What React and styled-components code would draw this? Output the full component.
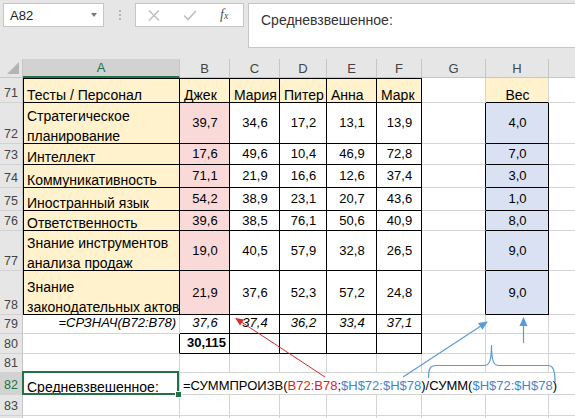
import React from 'react';
import styled, { createGlobalStyle } from 'styled-components';

const GRID = '#d4d4d4';
const CREAM = '#fff2cc';
const PINK = '#fad9d9';
const BLUE = '#d9e1f2';
const GREEN = '#217346';

const GlobalStyle = createGlobalStyle`
  html, body { margin: 0; padding: 0; }
  body { background: #fff; font-family: 'Liberation Sans', Arial, sans-serif; }
`;

// column I is mostly off screen, its letter is not visible
const columns = ['A', 'B', 'C', 'D', 'E', 'F', 'G', 'H', ''];
const people = ['Джек', 'Мария', 'Питер', 'Анна', 'Марк'];

const tests = [
  { n: 72, name: ['Стратегическое', 'планирование'], vals: ['39,7', '34,6', '17,2', '13,1', '13,9'], w: '4,0' },
  { n: 73, name: ['Интеллект'], vals: ['17,6', '49,6', '10,4', '46,9', '72,8'], w: '7,0' },
  { n: 74, name: ['Коммуникативность'], vals: ['71,1', '21,9', '16,6', '12,6', '37,4'], w: '3,0' },
  { n: 75, name: ['Иностранный язык'], vals: ['54,2', '38,9', '23,1', '20,7', '43,6'], w: '1,0' },
  { n: 76, name: ['Ответственность'], vals: ['39,6', '38,5', '76,1', '50,6', '40,9'], w: '8,0' },
  { n: 77, name: ['Знание инструментов', 'анализа продаж'], vals: ['19,0', '40,5', '57,9', '32,8', '26,5'], w: '9,0' },
  { n: 78, name: ['Знание', 'законодательных актов'], vals: ['21,9', '37,6', '52,3', '57,2', '24,8'], w: '9,0' },
];

const averages = ['37,6', '37,4', '36,2', '33,4', '37,1'];

function App() {
  return (
    <>
      <GlobalStyle />
      <Page>
        <FormulaBar>
          <NameBox>
            A82
            <Caret />
          </NameBox>
          <Grip>
            <Dot />
            <Dot />
            <Dot />
          </Grip>
          <FxBox>
            <ToolIcon width="12" height="11" viewBox="0 0 12 11">
              <path d="M1 0.5 L11 10.5 M11 0.5 L1 10.5" stroke="#bdbdbd" strokeWidth="1.3" fill="none" />
            </ToolIcon>
            <ToolIcon width="14" height="11" viewBox="0 0 14 11" $gap={23}>
              <path d="M1 5.5 L5 9.5 L13 1" stroke="#bdbdbd" strokeWidth="1.6" fill="none" />
            </ToolIcon>
            <FxLabel>
              f<small>x</small>
            </FxLabel>
          </FxBox>
          <FormulaInput>Средневзвешенное:</FormulaInput>
        </FormulaBar>

        <Sheet>
          <Corner>
            <svg width="14" height="13" viewBox="0 0 14 13">
              <polygon points="13,0 13,12 1,12" fill="#b4b4b4" />
            </svg>
          </Corner>
          {columns.map((c, i) => (
            <ColHead key={i} $active={c === 'A'}>{c}</ColHead>
          ))}

          {/* 71 */}
          <RowHead>71</RowHead>
          <Cell $bg={CREAM} $r="#000" $b="#000" $lt $tp>
            <Label>Тесты / Персонал</Label>
          </Cell>
          {people.map(p => (
            <Cell key={p} $bg={CREAM} $r="#000" $b="#000" $tp>
              <Label>{p}</Label>
            </Cell>
          ))}
          <Cell />
          <Cell $bg={CREAM} $b="#000" $h="center">
            <Label>Вес</Label>
          </Cell>
          <Cell />

          {tests.map(t => (
            <React.Fragment key={t.n}>
              <RowHead>{t.n}</RowHead>
              <Cell $bg={CREAM} $r="#000" $b="#000" $lt>
                <Label>
                  {t.name.map(line => (
                    <span key={line}>{line}</span>
                  ))}
                </Label>
              </Cell>
              {t.vals.map((v, i) => (
                <Cell key={i} $bg={i === 0 ? PINK : '#fff'} $r="#000" $b="#000" $h="center" $v="center">
                  <Num>{v}</Num>
                </Cell>
              ))}
              <Cell $r="#000" />
              <Cell $bg={BLUE} $r="#000" $b="#000" $h="center" $v="center">
                <Num>{t.w}</Num>
              </Cell>
              <Cell />
            </React.Fragment>
          ))}

          {/* 79 */}
          <RowHead>79</RowHead>
          <Cell $h="right">
            <Num $italic>=СРЗНАЧ(B72:B78)</Num>
          </Cell>
          {averages.map((v, i) => (
            <Cell key={i} $r="#000" $b="#000" $h="center">
              <Num $italic>{v}</Num>
            </Cell>
          ))}
          <Cell />
          <Cell />
          <Cell />

          {/* 80 */}
          <RowHead>80</RowHead>
          <Cell $r="#000" />
          <Cell $r="#000" $b="#000" $h="right">
            <Num $bold>30,115</Num>
          </Cell>
          <Cell $r="#000" $b="#000" />
          <Cell $r="#000" $b="#000" />
          <Cell $r="#000" $b="#000" />
          <Cell $r="#000" $b="#000" />
          <Cell />
          <Cell />
          <Cell />

          {/* 81 */}
          <RowHead>81</RowHead>
          {columns.map((c, i) => (
            <Cell key={i} />
          ))}

          {/* 82 */}
          <RowHead $active>82</RowHead>
          <Selected>
            <Label>Средневзвешенное:</Label>
          </Selected>
          <Overflow>
            <Formula>
              =СУММПРОИЗВ(<Ref $c="#e31c1c">B72:B78</Ref>;<Ref $c="#3f86cf">$H$72:$H$78</Ref>)/СУММ(
              <Ref $c="#3f86cf">$H$72:$H$78</Ref>)
            </Formula>
          </Overflow>

          {/* 83 and the edge of the next row */}
          <RowHead>83</RowHead>
          {columns.map((c, i) => (
            <Cell key={i} />
          ))}
          <RowHead />
          {columns.map((c, i) => (
            <Cell key={i} />
          ))}
        </Sheet>

        <Arrows width="575" height="418" viewBox="0 0 575 418">
          <defs>
            <marker id="redHead" viewBox="0 0 10 10" refX="9" refY="5" markerWidth="9" markerHeight="8" markerUnits="userSpaceOnUse" orient="auto">
              <path d="M0 0.5 L10 5 L0 9.5 z" fill="#d52b2b" />
            </marker>
            <marker id="blueHead" viewBox="0 0 10 10" refX="9" refY="5" markerWidth="10" markerHeight="9" markerUnits="userSpaceOnUse" orient="auto">
              <path d="M0 0.5 L10 5 L0 9.5 z" fill="#5b9bd5" />
            </marker>
          </defs>
          <path d="M325 377 L236 318.5" stroke="#d52b2b" strokeWidth="1" fill="none" markerEnd="url(#redHead)" />
          <path d="M403 377 L487 322" stroke="#5b9bd5" strokeWidth="1.2" fill="none" markerEnd="url(#blueHead)" />
          <path d="M523.5 343 L523.5 318" stroke="#5b9bd5" strokeWidth="1.2" fill="none" markerEnd="url(#blueHead)" />
          <path
            d="M428.5 378 C428.5 369 430 365.5 436 365.5 L484 365.5 C489 365.5 491.5 362 491.5 345 C491.5 362 494 365.5 499 365.5 L548 365.5 C553 365.5 555 370 555 382"
            stroke="#5b9bd5"
            strokeWidth="1.2"
            fill="none"
          />
        </Arrows>
      </Page>
    </>
  );
}

const Page = styled.div`
  position: relative;
  width: 575px;
  height: 418px;
  overflow: hidden;
  background: #e6e6e6;
  display: flex;
  flex-direction: column;
`;

const FormulaBar = styled.div`
  height: 59px;
  flex-shrink: 0;
  display: flex;
  align-items: flex-start;
  padding: 3px 0 0 3px;
  box-sizing: border-box;
`;

const NameBox = styled.div`
  width: 101px;
  height: 24px;
  box-sizing: border-box;
  background: #fff;
  border: 1px solid #c6c6c6;
  display: flex;
  align-items: center;
  justify-content: space-between;
  padding: 0 6px 0 6px;
  font-size: 13px;
  color: #222;
`;

const Caret = styled.span`
  width: 0;
  height: 0;
  border-left: 3.5px solid transparent;
  border-right: 3.5px solid transparent;
  border-top: 4px solid #7a7a7a;
`;

const Grip = styled.div`
  width: 31px;
  height: 24px;
  display: flex;
  flex-direction: column;
  align-items: center;
  justify-content: center;
  gap: 2px;
`;

const Dot = styled.span`
  width: 2px;
  height: 2px;
  background: #b4b4b4;
`;

const FxBox = styled.div`
  width: 109px;
  height: 24px;
  box-sizing: border-box;
  background: #fff;
  border: 1px solid #c6c6c6;
  display: flex;
  align-items: center;
  padding-left: 12px;
`;

const ToolIcon = styled.svg`
  margin-left: ${p => p.$gap || 0}px;
`;

const FxLabel = styled.span`
  margin-left: 23px;
  font-family: 'Liberation Serif', 'Times New Roman', serif;
  font-style: italic;
  font-size: 14px;
  color: #555;
  small {
    font-size: 10px;
  }
`;

const FormulaInput = styled.div`
  margin-left: 4px;
  flex: 1;
  height: 45px;
  box-sizing: border-box;
  background: #fff;
  border: 1px solid #c6c6c6;
  border-right: none;
  padding: 8px 0 0 12px;
  font-size: 14px;
  color: #333;
`;

const Sheet = styled.div`
  display: grid;
  grid-template-columns: 23px 157px 50px 50px 47px 50px 45px 64px 63px 64px;
  grid-template-rows: 19px 25px 41px 21px 23px 23px 20px 40px 44px 19px 20px 19px 22px 21px 20px;
  background: #fff;
`;

const Corner = styled.div`
  background: #e6e6e6;
  border-right: 1px solid #c6c6c6;
  border-bottom: 1px solid #c6c6c6;
  box-sizing: border-box;
  display: flex;
  align-items: flex-end;
  justify-content: flex-end;
  padding: 0 2px 2px 0;
`;

const ColHead = styled.div`
  box-sizing: border-box;
  background: ${p => (p.$active ? '#d2d2d2' : '#e6e6e6')};
  color: ${p => (p.$active ? GREEN : '#444')};
  border-right: 1px solid #c6c6c6;
  border-bottom: ${p => (p.$active ? `2px solid ${GREEN}` : '1px solid #c6c6c6')};
  display: flex;
  align-items: center;
  justify-content: center;
  font-size: 13px;
`;

const RowHead = styled.div`
  box-sizing: border-box;
  background: ${p => (p.$active ? '#d2d2d2' : '#e6e6e6')};
  color: ${p => (p.$active ? GREEN : '#444')};
  border-right: 1px solid #c6c6c6;
  border-bottom: 1px solid #d2d2d2;
  display: flex;
  align-items: flex-end;
  justify-content: center;
  padding-bottom: 2px;
  font-size: 12.5px;
  line-height: 14px;
`;

const justify = { left: 'flex-start', center: 'center', right: 'flex-end' };

const Cell = styled.div`
  position: relative;
  box-sizing: border-box;
  min-width: 0;
  background: ${p => p.$bg || '#fff'};
  border-right: 1px solid ${p => p.$r || GRID};
  border-bottom: 1px solid ${p => p.$b || GRID};
  box-shadow: ${p =>
    [p.$lt && 'inset 1px 0 0 #000', p.$tp && 'inset 0 1px 0 #000'].filter(Boolean).join(', ') || 'none'};
  display: flex;
  align-items: ${p => (p.$v === 'center' ? 'center' : 'flex-end')};
  justify-content: ${p => justify[p.$h || 'left']};
  padding: 0 3px 0 4px;
  color: #000;
`;

const Label = styled.div`
  display: flex;
  flex-direction: column;
  font-size: 14px;
  line-height: 20px;
  margin-bottom: -3px;
  white-space: nowrap;
`;

const Num = styled.span`
  font-size: 13px;
  line-height: 20px;
  white-space: nowrap;
  font-style: ${p => (p.$italic ? 'italic' : 'normal')};
  font-weight: ${p => (p.$bold ? 700 : 400)};
`;

const Selected = styled(Cell)`
  &::after {
    content: '';
    position: absolute;
    left: -1px;
    top: -2px;
    right: 0;
    bottom: -1px;
    border: 2px solid ${GREEN};
  }
  &::before {
    content: '';
    position: absolute;
    right: -3px;
    bottom: -4px;
    width: 5px;
    height: 5px;
    background: ${GREEN};
    border: 1px solid #fff;
    z-index: 1;
  }
`;

const Overflow = styled.div`
  grid-column: 3 / -1;
  border-bottom: 1px solid ${GRID};
  display: flex;
  align-items: flex-end;
  padding-left: 3px;
  overflow: visible;
`;

const Formula = styled.span`
  font-size: 13px;
  line-height: 20px;
  margin-bottom: -2px;
  white-space: nowrap;
  color: #000;
`;

const Ref = styled.span`
  color: ${p => p.$c};
`;

const Arrows = styled.svg`
  position: absolute;
  left: 0;
  top: 0;
  pointer-events: none;
`;

export default App;
